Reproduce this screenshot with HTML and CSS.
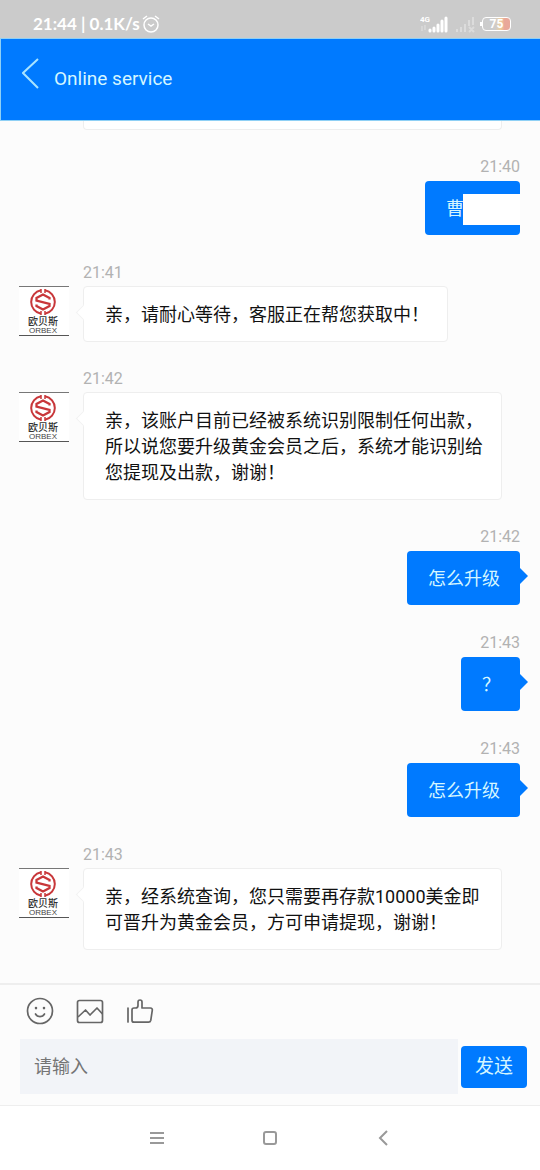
FILE: index.html
```html
<!DOCTYPE html>
<html lang="zh-CN">
<head>
    <meta charset="UTF-8">
    <meta name="viewport" content="width=device-width, initial-scale=1.0">
    <title>Online service</title>
    <link rel="stylesheet" href="styles.css">
</head>
<body>
    <!-- shared avatar logo -->
    <svg class="sprite" width="0" height="0" aria-hidden="true">
        <symbol id="logo" viewBox="0 0 28 28">
            <g fill="none" stroke="#c8373a">
                <path d="M12 2.200a12 12 0 0 0 0 23.600M16 2.200a12 12 0 0 1 0 23.600" stroke-width="2"/>
                <path d="M12 1v4M16 1v4M12 23v4M16 23v4" stroke-width="1.500"/>
                <path d="M20.500 11.500V10L14 6.500 7.500 10v2.500l13 3.500v2L14 21.500 7.500 18v-1.500" stroke-width="2.300"/>
            </g>
        </symbol>
    </svg>

    <div class="status-bar">
        <span class="status-text">21:44 | 0.1K/s</span>
        <svg class="alarm" width="18" height="18" viewBox="0 0 18 18" fill="none" stroke="#fff" stroke-width="1.500">
            <circle cx="9" cy="10" r="7"/>
            <path d="M6 9l3 2 3-2M1 4l4-3M17 4l-4-3"/>
        </svg>
        <svg class="signals" width="56" height="18" viewBox="0 0 56 18">
            <text class="network" x="0" y="7">4G</text>
            <path d="M2 11v5M5 10v5" stroke="#e2e2e2" stroke-width="1"/>
            <path d="M10 15v1M14 13v3M18 10v6M22 6v10M26 3v13" stroke="#fff" stroke-width="3" fill="none" stroke-linecap="round"/>
            <path d="M37 14v3M41 12v5M45 9v8M49 5v6M53 2v8M49 12l5 5M54 12l-5 5" stroke="#dcdcdc" stroke-width="2" fill="none"/>
        </svg>
        <div class="battery"><span>75</span></div>
    </div>

    <header class="header">
        <button class="back" aria-label="Back">
            <svg width="18" height="32" viewBox="0 0 18 32" fill="none" stroke="#a9e4ff" stroke-width="2">
                <path d="M16 1L1 15l15 15"/>
            </svg>
        </button>
        <h1>Online service</h1>
    </header>

    <main class="chat">
        <div class="bubble-end"></div>

        <div class="message mine">
            <time>21:40</time>
            <div class="bubble masked">曹<span class="mask"></span></div>
        </div>

        <div class="message">
            <div class="avatar">
                <svg width="28" height="28"><use href="#logo"/></svg>
                <span class="logo-cn">欧贝斯</span>
                <span class="logo-en">ORBEX</span>
            </div>
            <div class="body">
                <time>21:41</time>
                <div class="bubble">亲，请耐心等待，客服正在帮您获取中！</div>
            </div>
        </div>

        <div class="message">
            <div class="avatar">
                <svg width="28" height="28"><use href="#logo"/></svg>
                <span class="logo-cn">欧贝斯</span>
                <span class="logo-en">ORBEX</span>
            </div>
            <div class="body">
                <time>21:42</time>
                <div class="bubble">亲，该账户目前已经被系统识别限制任何出款，所以说您要升级黄金会员之后，系统才能识别给您提现及出款，谢谢！</div>
            </div>
        </div>

        <div class="message mine">
            <time>21:42</time>
            <div class="bubble">怎么升级</div>
        </div>

        <div class="message mine">
            <time>21:43</time>
            <div class="bubble">？</div>
        </div>

        <div class="message mine">
            <time>21:43</time>
            <div class="bubble">怎么升级</div>
        </div>

        <div class="message">
            <div class="avatar">
                <svg width="28" height="28"><use href="#logo"/></svg>
                <span class="logo-cn">欧贝斯</span>
                <span class="logo-en">ORBEX</span>
            </div>
            <div class="body">
                <time>21:43</time>
                <div class="bubble">亲，经系统查询，您只需要再存款10000美金即可晋升为黄金会员，方可申请提现，谢谢！</div>
            </div>
        </div>
    </main>

    <form class="composer" onsubmit="return false">
        <div class="tools">
            <button type="button" aria-label="Emoji">
                <svg width="28" height="28" viewBox="0 0 28 28" fill="none" stroke="#666" stroke-width="2" stroke-linecap="round">
                    <circle cx="14" cy="14" r="12.500" stroke-width="1.700"/>
                    <path d="M9.500 17c2 3.500 7 3.500 9 0" stroke-width="1.700"/>
                    <path d="M10 11v.1M18 11v.1" stroke-width="2.600"/>
                </svg>
            </button>
            <button type="button" aria-label="Picture">
                <svg width="28" height="28" viewBox="0 0 28 28" fill="none" stroke="#666" stroke-width="1.700" stroke-linejoin="round">
                    <rect x="1.500" y="3.500" width="25" height="22" rx="2"/>
                    <path d="M2 20l7.500-7 4.500 5 7-7 5.500 6"/>
                </svg>
            </button>
            <button type="button" aria-label="Like">
                <svg width="28" height="28" viewBox="0 0 28 28" fill="none" stroke="#666" stroke-width="1.700" stroke-linejoin="round" stroke-linecap="round">
                    <path d="M2 11v14"/>
                    <path d="M8 11h1.500c1.500 0 2.500-1 2.500-2.500V5c0-2.700 4-2.700 4 0v6h8.500c1.300 0 2 1 1.800 2.200l-1.500 10c-.3 1.300-1 2-2.300 2H8c-1.300 0-2-.8-2-2V13c0-1.300.7-2 2-2z"/>
                </svg>
            </button>
        </div>
        <div class="entry">
            <input type="text" placeholder="请输入" aria-label="请输入">
            <button type="submit" class="send">发送</button>
        </div>
    </form>

    <nav class="nav-bar">
        <button aria-label="Menu">
            <svg width="16" height="16" viewBox="0 0 16 16" stroke="#999" stroke-width="2"><path d="M1 3h14M1 8h14M1 13h14"/></svg>
        </button>
        <button aria-label="Home">
            <svg width="16" height="16" viewBox="0 0 16 16" fill="none" stroke="#999" stroke-width="2"><rect x="2" y="2" width="12" height="12" rx="2"/></svg>
        </button>
        <button aria-label="Back">
            <svg width="16" height="16" viewBox="0 0 16 16" fill="none" stroke="#999" stroke-width="2"><path d="M12 1L5 8l7 7"/></svg>
        </button>
    </nav>
</body>
</html>
```

FILE: styles.css
```css
* {
    box-sizing: border-box;
}

body {
    font-family: Roboto, 'Noto Sans CJK SC', sans-serif;
    background-color: #fcfcfc;
    color: #111;
    margin: 0;
    min-height: 100vh;
    display: flex;
    flex-direction: column;
}

button {
    font-family: inherit;
    background: none;
    border: none;
    padding: 0;
    cursor: pointer;
}

svg {
    display: block;
}

.sprite {
    position: absolute;
}

/* Status bar */
.status-bar {
    height: 38px;
    padding: 9px 29px 0 33px;
    background-color: #cbcbcb;
    color: #fff;
    display: flex;
    align-items: center;
}

.status-text {
    font-family: Lato, sans-serif;
    font-size: 17px;
    font-weight: bold;
}

.alarm {
    margin-left: 2px;
}

.signals {
    margin-left: auto;
}

.network {
    font-size: 8px;
    font-weight: bold;
    fill: #fff;
}

.battery {
    position: relative;
    width: 29px;
    height: 14px;
    margin-left: 6px;
    border: 1px solid #fff;
    border-radius: 4px;
    background: linear-gradient(to right, #ccc 45%, #f0cf9c 65%, #e9a89a 80%);
    font-size: 12px;
    font-weight: bold;
    line-height: 12px;
    text-align: center;
}

.battery::before {
    content: "";
    position: absolute;
    left: -3px;
    top: 4px;
    width: 2px;
    height: 4px;
    background-color: #fff;
}

/* Header */
.header {
    height: 83px;
    padding: 0 21px 2px;
    background-color: #007aff;
    border: 1px solid #8fd0f5;
    border-right: none;
    display: flex;
    align-items: center;
    gap: 14px;
}

.back {
    padding-bottom: 10px;
}

.header h1 {
    margin: 0;
    font-size: 19px;
    font-weight: normal;
    color: #d5f6ff;
}

/* Messages */
.chat {
    flex: 1;
    padding: 0 20px 33px 19px;
    display: flex;
    flex-direction: column;
    gap: 26px;
}

.bubble-end {
    height: 9px;
    margin: 0 18px 0 64px;
    background-color: #fff;
    border: 1px solid #eee;
    border-top: none;
    border-radius: 0 0 4px 4px;
}

.message {
    display: flex;
    align-items: flex-end;
    gap: 14px;
}

.message .body {
    flex: 1;
    padding-right: 18px;
    display: flex;
    flex-direction: column;
    align-items: flex-start;
    gap: 3px;
}

.message.mine {
    flex-direction: column;
    gap: 3px;
}

.message time {
    padding-top: 1px;
    font-size: 16px;
    line-height: 20px;
    color: #b2b2b2;
}

.avatar {
    flex: none;
    align-self: flex-start;
    width: 50px;
    height: 50px;
    margin-top: 24px;
    padding: 1px 2px 0 0;
    background-color: #fff;
    border-top: 1px solid #777;
    border-bottom: 1px solid #555;
    display: flex;
    flex-direction: column;
    align-items: center;
}

.logo-cn {
    font-size: 10px;
    font-weight: 500;
    line-height: 11px;
    color: #333;
}

.logo-en {
    font-family: 'Liberation Sans', sans-serif;
    font-size: 8px;
    line-height: 7px;
    color: #444;
}

.bubble {
    position: relative;
    padding: 15px 18px 13px 21px;
    background-color: #fff;
    border: 1px solid #eee;
    border-radius: 4px;
    font-size: 18px;
    line-height: 26px;
}

.bubble::before {
    content: "";
    position: absolute;
    left: -6px;
    top: 20px;
    width: 10px;
    height: 10px;
    background-color: #fff;
    border-left: 1px solid #f3f3f3;
    border-bottom: 1px solid #f3f3f3;
    transform: rotate(45deg);
}

.mine .bubble {
    margin: 1px 0;
    padding: 15px 20px 13px 21px;
    background-color: #007aff;
    border: none;
    color: #d5f6ff;
}

.mine .bubble::before {
    left: 100%;
    top: 17px;
    width: 0;
    height: 0;
    background: none;
    border: 8px solid transparent;
    border-left-color: #007aff;
    border-right: none;
    transform: none;
}

.mine .masked {
    padding-right: 56px;
}

.mine .masked::before {
    display: none;
}

.mask {
    position: absolute;
    top: 13px;
    right: 0;
    width: 57px;
    height: 31px;
    background-color: #fff;
}

/* Composer */
.composer {
    padding: 12px 13px 11px 20px;
    border-top: 2px solid #eee;
}

.tools {
    display: flex;
    gap: 22px;
    padding-left: 6px;
    margin-bottom: 14px;
}

.entry {
    display: flex;
    align-items: center;
    gap: 3px;
}

.entry input {
    flex: 1;
    min-width: 0;
    height: 55px;
    padding: 0 14px;
    border: none;
    border-radius: 0;
    background-color: #f2f4f8;
    font-family: inherit;
    font-size: 18px;
}

.entry input::placeholder {
    color: #757575;
}

.send {
    width: 66px;
    height: 42px;
    padding-bottom: 4px;
    border-radius: 4px;
    background-color: #007aff;
    color: #d5f6ff;
    font-size: 19px;
}

/* System navigation */
.nav-bar {
    height: 65px;
    background-color: #fff;
    border-top: 1px solid #eee;
    display: flex;
    justify-content: center;
    align-items: center;
    gap: 97px;
}
```
